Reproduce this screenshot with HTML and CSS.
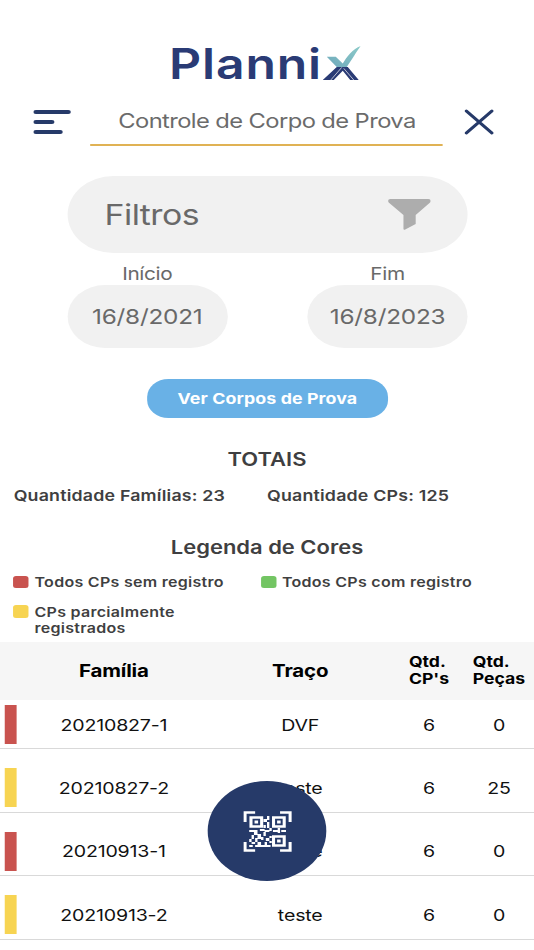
FILE: index.html
```html
<!DOCTYPE html>
<html lang="pt-BR">
<head>
<meta charset="utf-8">
<title>Plannix - Controle de Corpo de Prova</title>
<link rel="stylesheet" href="styles.css">
</head>
<body>
<main class="screen">
  <div class="logo">
    <span class="logo-text">Planni</span>
    <svg class="logo-x" viewBox="0 0 38 36" preserveAspectRatio="none">
      <defs><linearGradient id="teal" x1="0" y1="1" x2="1" y2="0"><stop offset="0" stop-color="#6fa9bb"/><stop offset="1" stop-color="#8ccbc9"/></linearGradient></defs>
      <path fill="url(#teal)" d="M4 11H13L20 18C24 11 30 3 38 0C34 5 30 13 24 21.500H14Z"/>
      <path fill="#2a3b75" d="M14 21.500H25L36 35H27.500L20 25.500L11 35H0Z"/>
      <path fill="none" stroke="#fff" stroke-width="0.700" d="M19 22L8 35M21 23L31 35"/>
    </svg>
  </div>

  <header class="topbar">
    <svg class="menu-icon" viewBox="0 0 32 26"><path d="M2.200 3H29.600M2.200 13H15.800M2.200 23H22.800"/></svg>
    <h1 class="title">Controle de Corpo de Prova</h1>
    <svg class="close-icon" viewBox="0 0 26 26"><path d="M2 2L23.500 24M23.500 2L2 24"/></svg>
  </header>

  <section class="filters">
    <div class="filter-pill">
      <span>Filtros</span>
      <svg class="funnel" viewBox="0 0 36 31"><path d="M2 0H34C36 0 36.500 2.500 35.200 3.800L23.300 16V25L14.500 30.500C13.500 31 13 30.600 13 30V16L.800 3.800C-.500 2.500 0 0 2 0Z"/></svg>
    </div>
    <div class="dates">
      <label class="date"><span class="date-label">Início</span><span class="date-value">16/8/2021</span></label>
      <label class="date"><span class="date-label">Fim</span><span class="date-value">16/8/2023</span></label>
    </div>
    <button class="submit">Ver Corpos de Prova</button>
  </section>

  <h2 class="heading totals-heading">TOTAIS</h2>
  <div class="totals"><span>Quantidade Famílias: 23</span><span>Quantidade CPs: 125</span></div>
  <h2 class="heading legend-heading">Legenda de Cores</h2>
  <ul class="legend">
    <li><i class="swatch red"></i><span>Todos CPs sem registro</span></li>
    <li><i class="swatch green"></i><span>Todos CPs com registro</span></li>
    <li><i class="swatch yellow"></i><span>CPs parcialmente<br>registrados</span></li>
  </ul>

  <section class="table">
    <div class="row head"><i></i><span>Família</span><span>Traço</span><span class="small">Qtd.<br>CP's</span><span class="small">Qtd.<br>Peças</span></div>
    <div class="row first"><i class="bar red"></i><span>20210827-1</span><span>DVF</span><span>6</span><span>0</span></div>
    <div class="row"><i class="bar yellow"></i><span>20210827-2</span><span>teste</span><span>6</span><span>25</span></div>
    <div class="row"><i class="bar red"></i><span>20210913-1</span><span>teste</span><span>6</span><span>0</span></div>
    <div class="row"><i class="bar yellow"></i><span>20210913-2</span><span>teste</span><span>6</span><span>0</span></div>
  </section>

  <button class="fab" aria-label="Ler QR code">
    <svg viewBox="0 0 41 41">
      <path class="frame" d="M1.500 11V1.500H10M31 1.500H39.500V11M39.500 31V39.500H31M10 39.500H1.500V31"/>
      <path class="finder" d="M6.500 6.500H15.500V15.500H6.500ZM25.500 6.500H34.500V15.500H25.500ZM25.500 25.500H34.500V34.500H25.500Z"/>
      <path class="dots" d="M9.500 9.500h3v3h-3zM28.500 9.500h3v3h-3zM28.500 28.500h3v3h-3zM20 5h2v4h-2zM17 8h3v3h-3zM20 11h2v6h-2zM17 14h2v3h-2zM5 19h7v2h-7zM14 18h4v2h-4zM18 19h4v2h-4zM22 17h2v3h-2zM25 19h4v2h-4zM29 17h2v5h-2zM32 19h4v2h-4zM9 21h3v3h-3zM7 24h2v4h-2zM12 23h3v5h-3zM15 26h2v3h-2zM17 21h2v4h-2zM5 28h2v3h-2zM10 27h2v4h-2zM7 31h3v2h-3zM5 34h3v2h-3zM10 34h8v2h-8zM12 31h3v3h-3zM18 31h2v5h-2zM19 27h3v3h-3zM22 25h2v2h-2zM20 34h3v2h-3zM22 30h2v2h-2z"/>
    </svg>
  </button>
</main>
</body>
</html>
```
FILE: styles.css
```css
* { box-sizing: border-box; }
body { margin: 0; background: #fff; overflow: hidden; }
h1, h2, ul { margin: 0; padding: 0; font-weight: inherit; }
button { border: 0; padding: 0; font: inherit; }

.screen {
  position: relative;
  width: 450px;
  height: 950px;
  overflow: hidden;
  transform: scaleX(1.18667);
  transform-origin: 0 0;
  font-family: Inter, "Liberation Sans", sans-serif;
  color: #3f3f41;
}

.logo { display: flex; padding: 46px 0 0 142.500px; height: 96px; }
.logo-text { width: 129px; font-size: 42px; font-weight: 600; line-height: 36px; color: #2a3b75; letter-spacing: 0.700px; }
.logo-x { width: 32px; height: 35px; }

.topbar { display: flex; height: 50px; }
.menu-icon { width: 32px; height: 26px; margin: 12.500px 0 0 28.400px; fill: none; stroke: #263a69; stroke-width: 4.200; stroke-linecap: round; }
.title { width: 297px; margin-left: 16.100px; height: 50px; border-bottom: 2px solid #e0b254; text-align: center; font-size: 20px; letter-spacing: -0.500px; line-height: 50px; color: #6b6b6b; }
.close-icon { width: 26px; height: 26px; margin: 12.500px 0 0 18px; fill: none; stroke: #263a69; stroke-width: 2.800; stroke-linecap: round; }

.filters { width: 337.500px; margin: 29.500px 0 0 56.600px; color: #696969; }
.filter-pill { display: flex; justify-content: space-between; align-items: center; height: 77px; padding: 0 31.500px; border-radius: 39px; background: #f1f1f1; font-size: 28.500px; letter-spacing: -0.450px; }
.funnel { width: 36px; height: 31px; fill: #adadad; }
.dates { display: flex; justify-content: space-between; padding-top: 10.500px; }
.date { display: block; width: 135px; text-align: center; }
.date-label { display: block; height: 22px; line-height: 22px; font-size: 17.500px; letter-spacing: -0.300px; }
.date-value { display: block; height: 63px; line-height: 63px; border-radius: 32px; background: #f1f1f1; font-size: 20.500px; letter-spacing: -0.200px; }
.submit { display: block; width: 203px; height: 39px; margin: 31px auto 0; border-radius: 18px; background: #69b1e6; color: #fff; font-size: 15px; letter-spacing: 0.080px; font-weight: 700; }

.heading { text-align: center; font-size: 18.500px; font-weight: 600; line-height: 24px; }
.totals-heading { margin-top: 29px; }
.totals { display: grid; grid-template-columns: 213.500px 1fr; padding-left: 11.500px; margin-top: 15px; font-size: 15px; letter-spacing: 0.160px; font-weight: 600; line-height: 20px; }
.legend-heading { margin-top: 29px; }
.legend { display: grid; grid-template-columns: 208.500px 1fr; row-gap: 13px; padding-left: 11.400px; margin-top: 15px; list-style: none; font-size: 13.500px; letter-spacing: 0.230px; font-weight: 600; line-height: 16.500px; }
.legend li { display: flex; gap: 5px; }
.swatch { width: 12.700px; height: 12.500px; margin-top: 1.500px; border-radius: 2.500px; }
.red { background: #c9534f; }
.green { background: #73c563; }
.yellow { background: #f7d452; }

.table { margin-top: 5px; color: #111; font-size: 16.500px; letter-spacing: -0.150px; }
.row { display: grid; grid-template-columns: 18px 156px 158px 59px 59px; justify-items: center; align-items: center; height: 63.500px; padding-top: 15px; border-bottom: 1.500px solid #d9d9d9; }
.row.first { height: 49.500px; padding-top: 1.500px; }
.row.head { height: 58px; padding: 0; border: 0; background: #f6f6f6; font-size: 17.300px; font-weight: 700; color: #000; }
.row .small { padding-top: 1.500px; font-size: 14.800px; line-height: 17.700px; letter-spacing: 0; }
.bar { width: 9.500px; height: 39px; }

.fab { position: absolute; left: 175px; top: 781px; width: 100px; height: 100px; border-radius: 50%; background: #263a69; }
.fab svg { display: block; width: 41px; height: 41px; margin: 0 auto; }
.frame { fill: none; stroke: #fff; stroke-width: 2.600; }
.finder { fill: none; stroke: #fff; stroke-width: 2.600; }
.dots { fill: #fff; }
```
